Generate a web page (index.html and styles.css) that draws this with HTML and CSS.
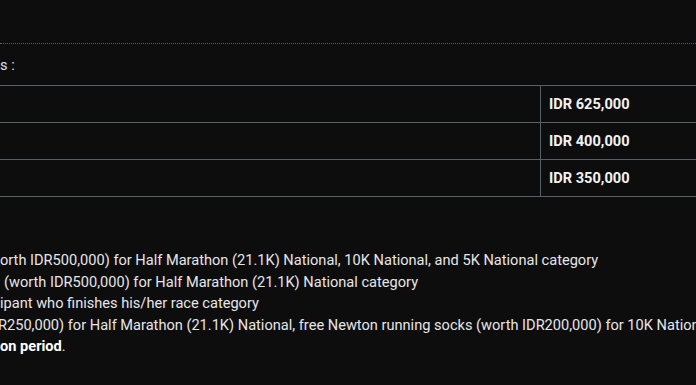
FILE: index.html
```html
<!DOCTYPE html>
<html>
<head>
<meta charset="utf-8">
<link rel="stylesheet" href="styles.css">
</head>
<body>
<div class="page">
  <div class="head-rule"></div>
  <p class="intro">s :</p>
  <table class="prices">
    <tr><td class="cat"></td><td class="price">IDR 625,000</td></tr>
    <tr><td class="cat"></td><td class="price">IDR 400,000</td></tr>
    <tr><td class="cat"></td><td class="price">IDR 350,000</td></tr>
  </table>
  <div class="notes">
    <p class="line l1">orth IDR500,000) for Half Marathon (21.1K) National, 10K National, and 5K National category</p>
    <p class="line l2">(worth IDR500,000) for Half Marathon (21.1K) National category</p>
    <p class="line l3">ipant who finishes his/her race category</p>
    <p class="line l4">R250,000) for Half Marathon (21.1K) National, free Newton running socks (worth IDR200,000) for 10K National</p>
    <p class="line l5"><strong>on period</strong>.</p>
  </div>
</div>
</body>
</html>
```
FILE: styles.css
```css
html, body {
  margin: 0;
  padding: 0;
  background: #0d0d0e;
  overflow: hidden;
}
.page {
  width: 696px;
  height: 385px;
  overflow: hidden;
  font-family: Roboto, "Liberation Sans", sans-serif;
  color: #e6e6e6;
  font-size: 14.6px;
}
.head-rule {
  height: 43px;
  border-bottom: 1px dotted #5a6068;
}
.intro {
  margin: 0;
  height: 41px;
  line-height: 42px;
  color: #dde0e3;
  white-space: nowrap;
}
.prices {
  border-collapse: collapse;
  width: 760px;
  margin-left: -1px;
}
.prices td {
  border: 1px solid #5a5e66;
  height: 36px;
  padding: 0 8px;
}
.cat {
  width: 524px;
}
.price {
  font-weight: 700;
  font-size: 14.6px;
  color: #f2f2f2;
}
.notes {
  padding-top: 53px;
}
.line {
  margin: 0;
  line-height: 21.5px;
  white-space: nowrap;
}
.l1 { text-indent: 0; }
.l2 { text-indent: 4px; }
.l3 { text-indent: 0; }
.l4 { text-indent: -2px; }
.l5 { text-indent: 0; }
.line strong {
  font-weight: 700;
  color: #fff;
}
```
